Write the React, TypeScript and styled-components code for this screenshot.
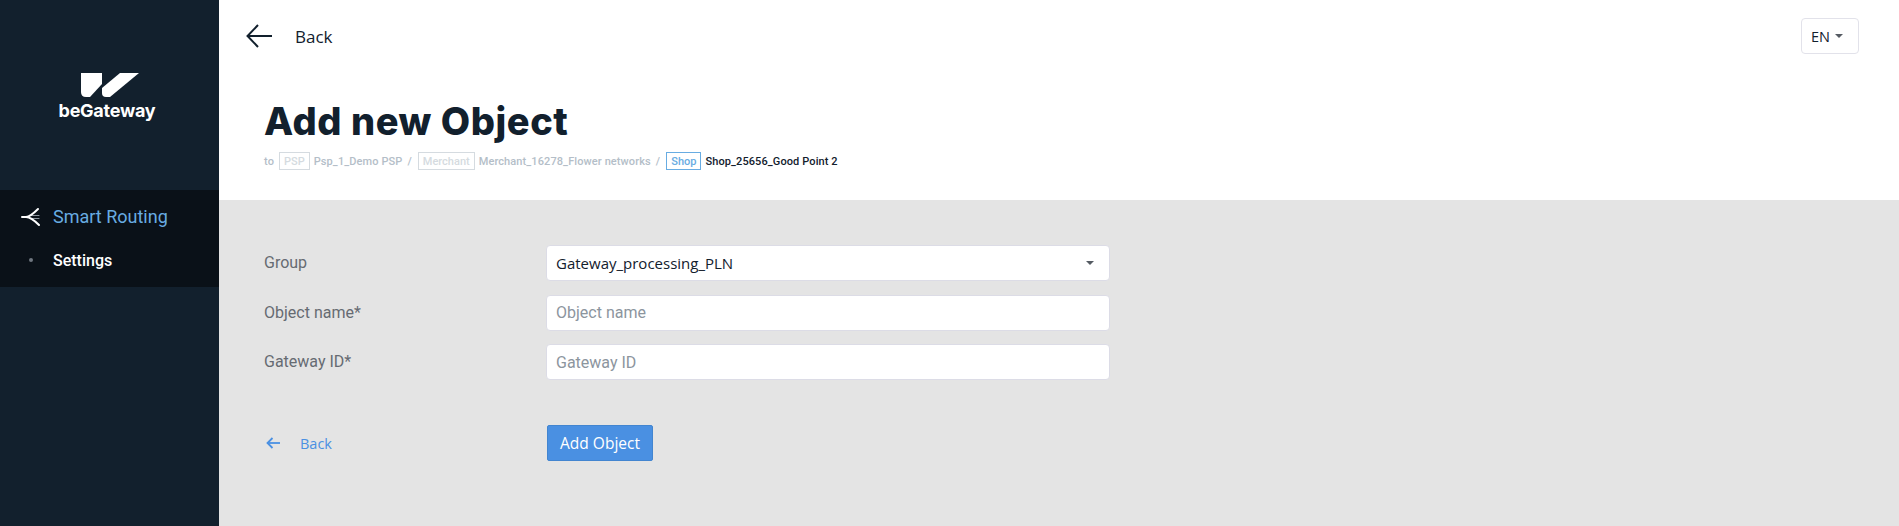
import React from 'react';
import styled, { createGlobalStyle } from 'styled-components';

const GlobalStyle = createGlobalStyle`
  html, body {
    margin: 0;
    padding: 0;
    background: #e4e4e4;
  }
  * {
    box-sizing: border-box;
  }
`;

const Page = styled.div`
  display: flex;
  height: 526px;
  overflow: hidden;
  font-family: Roboto, sans-serif;
`;

const Sidebar = styled.aside`
  flex: 0 0 219px;
  background: #12202d;
  color: #fff;
`;

const LogoBlock = styled.div`
  height: 190px;
  padding-top: 73px;
  display: flex;
  flex-direction: column;
  align-items: center;
`;

const LogoMark = styled.svg`
  margin-left: 1px;
`;

const LogoText = styled.span`
  margin-top: 3px;
  margin-right: 5px;
  font-family: 'Inter', sans-serif;
  font-weight: 700;
  font-size: 18px;
  line-height: 22px;
  letter-spacing: -0.25px;
  color: #fff;
`;

const NavGroup = styled.nav`
  height: 97px;
  background: #0a1118;
  display: flex;
  flex-direction: column;
`;

const NavItem = styled.div`
  display: flex;
  align-items: center;
  height: 53px;
  padding-left: 20px;
  gap: 13px;
  font-size: 18px;
  color: #68ace2;
`;

const NavSubItem = styled.div`
  display: flex;
  align-items: center;
  height: 34px;
  padding-left: 29px;
  gap: 20px;
  font-size: 16px;
  font-weight: 500;
  color: #fff;
`;

const Dot = styled.span`
  width: 4px;
  height: 4px;
  border-radius: 50%;
  background: #6f7780;
`;

const Main = styled.main`
  flex: 1;
  display: flex;
  flex-direction: column;
  min-width: 0;
`;

const Header = styled.header`
  height: 200px;
  background: #fff;
  display: flex;
  flex-direction: column;
`;

const TopBar = styled.div`
  display: flex;
  align-items: center;
  justify-content: space-between;
  padding: 18px 40px 0 27px;
`;

const TopBack = styled.div`
  display: flex;
  align-items: center;
  gap: 23px;
  font-family: 'Open Sans', sans-serif;
  font-size: 17px;
  color: #12202d;
`;

const LangButton = styled.div`
  width: 58px;
  height: 36px;
  border: 1px solid #e2e2ea;
  border-radius: 4px;
  display: flex;
  align-items: center;
  padding-left: 9px;
  gap: 5px;
  font-family: 'Open Sans', sans-serif;
  font-size: 14.5px;
  color: #12202d;
`;

const Caret = styled.span`
  width: 0;
  height: 0;
  border-left: 4.5px solid transparent;
  border-right: 4.5px solid transparent;
  border-top: 4.5px solid #555b63;
`;

const TitleBlock = styled.div`
  padding: 44px 0 0 45px;
`;

const Title = styled.h1`
  margin: 0;
  font-family: 'Inter', sans-serif;
  font-weight: 800;
  font-size: 38px;
  line-height: 46px;
  letter-spacing: 0.55px;
  color: #12202d;
`;

const Crumbs = styled.div`
  margin-top: 8px;
  display: flex;
  align-items: center;
  font-size: 11px;
  font-weight: 500;
  letter-spacing: 0.1px;
  color: #b4bec8;
`;

const CrumbTag = styled.span<{ $active?: boolean }>`
  height: 18px;
  padding: 0 4px;
  margin: 0 4px 0 5px;
  display: inline-flex;
  align-items: center;
  font-size: 11px;
  letter-spacing: 0;
  border: 1px solid ${(p) => (p.$active ? '#68ace2' : '#d5dbe0')};
  color: ${(p) => (p.$active ? '#68ace2' : '#d5dbe0')};
`;

const CrumbLink = styled.span<{ $current?: boolean }>`
  color: ${(p) => (p.$current ? '#12202d' : '#b4bec8')};
`;

const Separator = styled.span`
  margin: 0 1px 0 5px;
`;

const Body = styled.div`
  flex: 1;
  background: #e4e4e4;
  padding: 45px 0 0 45px;
`;

const FormRow = styled.div`
  display: grid;
  grid-template-columns: 282px 564px;
  align-items: center;
  margin-bottom: 13.5px;
`;

const Label = styled.label`
  font-size: 16px;
  color: #666b72;
  margin-top: -1px;
`;

const FieldBox = styled.div`
  height: 36px;
  background: #fff;
  border: 1px solid #dcdce6;
  border-radius: 4px;
  display: flex;
  align-items: center;
  justify-content: space-between;
  padding: 0 15px 0 9px;
`;

const SelectValue = styled.span`
  font-family: 'Open Sans', sans-serif;
  font-size: 15px;
  color: #12202d;
`;

const Input = styled.input`
  width: 100%;
  height: 36px;
  background: #fff;
  border: 1px solid #dcdce6;
  border-radius: 4px;
  padding: 0 9px;
  font-family: Roboto, sans-serif;
  font-size: 16px;
  outline: none;
  &::placeholder {
    color: #8c959e;
    opacity: 1;
  }
`;

const Actions = styled.div`
  display: grid;
  grid-template-columns: 283px 106px;
  align-items: center;
  margin-top: 45px;
`;

const BodyBack = styled.div`
  display: flex;
  align-items: center;
  gap: 20px;
  padding-left: 2px;
  font-family: 'Open Sans', sans-serif;
  font-size: 14.5px;
  color: #4a90e2;
`;

const SubmitButton = styled.button`
  height: 36px;
  border: 1px solid #4285d0;
  border-radius: 2px;
  background: #4a90e2;
  color: #fff;
  font-family: 'Open Sans', sans-serif;
  font-size: 15.5px;
  padding: 0;
`;

const Logo = () => (
  <LogoMark width="58" height="24" viewBox="0 0 58 24" fill="#fff">
    <path d="M0 0H21V11L9 24H5Q0 24 0 19Z" />
    <path d="M39 0H58L29 24H25Q21 24 21 20V15Z" />
  </LogoMark>
);

const RoutingIcon = () => (
  <svg width="20" height="20" viewBox="0 0 20 20" fill="none" strokeLinecap="round">
    <path d="M11 8.5H19M11 11.5H19" stroke="#8b949c" strokeWidth="1.2" />
    <path d="M2 10H6C10 10 14 6 18 2" stroke="#fff" strokeWidth="2" />
    <path d="M6 10C10 10 15 14 19 18" stroke="#fff" strokeWidth="2" />
  </svg>
);

const BackArrow = () => (
  <svg width="26" height="24" viewBox="0 0 26 24" fill="none" stroke="#12202d" strokeWidth="2">
    <path d="M26 12H1.5" />
    <path d="M12 1L1.5 12L12 23" />
  </svg>
);

const SmallArrow = () => (
  <svg width="14" height="12" viewBox="0 0 14 12" fill="none" stroke="#4a90e2" strokeWidth="1.8">
    <path d="M14 6H1.5" />
    <path d="M6.5 1L1.5 6L6.5 11" />
  </svg>
);

export default function App() {
  return (
    <Page>
      <GlobalStyle />
      <Sidebar>
        <LogoBlock>
          <Logo />
          <LogoText>beGateway</LogoText>
        </LogoBlock>
        <NavGroup>
          <NavItem>
            <RoutingIcon />
            Smart Routing
          </NavItem>
          <NavSubItem>
            <Dot />
            Settings
          </NavSubItem>
        </NavGroup>
      </Sidebar>
      <Main>
        <Header>
          <TopBar>
            <TopBack>
              <BackArrow />
              Back
            </TopBack>
            <LangButton>
              EN
              <Caret />
            </LangButton>
          </TopBar>
          <TitleBlock>
            <Title>Add new Object</Title>
            <Crumbs>
              to
              <CrumbTag>PSP</CrumbTag>
              <CrumbLink>Psp_1_Demo PSP</CrumbLink>
              <Separator>/</Separator>
              <CrumbTag>Merchant</CrumbTag>
              <CrumbLink>Merchant_16278_Flower networks</CrumbLink>
              <Separator>/</Separator>
              <CrumbTag $active>Shop</CrumbTag>
              <CrumbLink $current>Shop_25656_Good Point 2</CrumbLink>
            </Crumbs>
          </TitleBlock>
        </Header>
        <Body>
          <FormRow>
            <Label>Group</Label>
            <FieldBox>
              <SelectValue>Gateway_processing_PLN</SelectValue>
              <Caret />
            </FieldBox>
          </FormRow>
          <FormRow>
            <Label>Object name*</Label>
            <Input placeholder="Object name" />
          </FormRow>
          <FormRow>
            <Label>Gateway ID*</Label>
            <Input placeholder="Gateway ID" />
          </FormRow>
          <Actions>
            <BodyBack>
              <SmallArrow />
              Back
            </BodyBack>
            <SubmitButton>Add Object</SubmitButton>
          </Actions>
        </Body>
      </Main>
    </Page>
  );
}
